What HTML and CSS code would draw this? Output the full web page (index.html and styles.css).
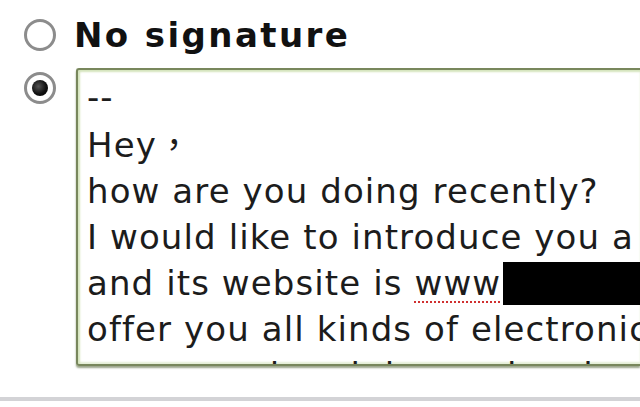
FILE: index.html
```html
<!DOCTYPE html>
<html lang="en">
<head>
  <meta charset="UTF-8">
  <title>Signature</title>
  <link rel="stylesheet" href="styles.css">
</head>
<body>
  <div class="sig-options">
    <label class="sig-row">
      <span class="radio"></span>
      <span class="sig-label">No signature</span>
    </label>
    <div class="sig-row sig-row-text">
      <span class="radio checked"></span>
      <div class="sig-box">
        <div class="sig-line">--</div>
        <div class="sig-line">Hey<span class="cjk">，</span></div>
        <div class="sig-line">how are you doing recently?</div>
        <div class="sig-line">I would like to introduce you a company</div>
        <div class="sig-line">and its website is <span class="misspelled">www</span><span class="redacted"></span></div>
        <div class="sig-line">offer you all kinds of electronic products</div>
        <div class="sig-line">man over i-pad, in service, in warranty</div>
      </div>
    </div>
  </div>
  <div class="divider"></div>
</body>
</html>
```

FILE: styles.css
```css
body {
  margin: 0;
  padding: 0;
  width: 640px;
  height: 407px;
  overflow: hidden;
  background: #fff;
  font-family: 'DejaVu Sans', Verdana, sans-serif;
  color: #1a1a1a;
}

.sig-options {
  padding: 15px 0 0 24px;
}

.sig-row {
  display: flex;
  align-items: center;
}

.sig-row-text {
  align-items: flex-start;
  margin-top: 13px;
}

.radio {
  flex: none;
  width: 26px;
  height: 26px;
  border: 3px solid #8c8c8c;
  border-radius: 50%;
  background: #fff;
  position: relative;
}

.sig-row-text .radio {
  margin-top: 4px;
}

.radio.checked::after {
  content: "";
  position: absolute;
  left: 5px;
  top: 5px;
  width: 16px;
  height: 16px;
  border-radius: 50%;
  background: radial-gradient(circle at 40% 40%, #555 0, #111 55%, #000 100%);
}

.sig-label {
  margin-left: 18px;
  font-size: 34px;
  font-weight: bold;
  letter-spacing: 2.4px;
  color: #111;
}

.sig-box {
  margin-left: 20px;
  flex: 1;
  height: 290px;
  overflow: hidden;
  border: 2px solid #78875c;
  border-right: none;
  border-radius: 3px 0 0 3px;
  box-shadow: inset 2px 2px 2px #d4e4bc, inset 0 -2px 2px #e4efd6, 0 2px 2px #9aa58a;
  padding: 4px 0 0 9px;
}

.sig-line {
  font-size: 34px;
  line-height: 46px;
  letter-spacing: 1.1px;
  white-space: pre;
  color: #1c1c1c;
}

.cjk {
  font-family: 'Noto Sans CJK TC', sans-serif;
  letter-spacing: 0;
}

.misspelled {
  text-decoration: underline dotted #d03030;
  text-decoration-thickness: 2px;
  text-underline-offset: 6px;
}

.redacted {
  display: inline-block;
  width: 160px;
  height: 43px;
  margin-left: 2px;
  background: #000;
  vertical-align: -10px;
}

.divider {
  margin-top: 31px;
  height: 4px;
  background: #d3d3d6;
}
```
